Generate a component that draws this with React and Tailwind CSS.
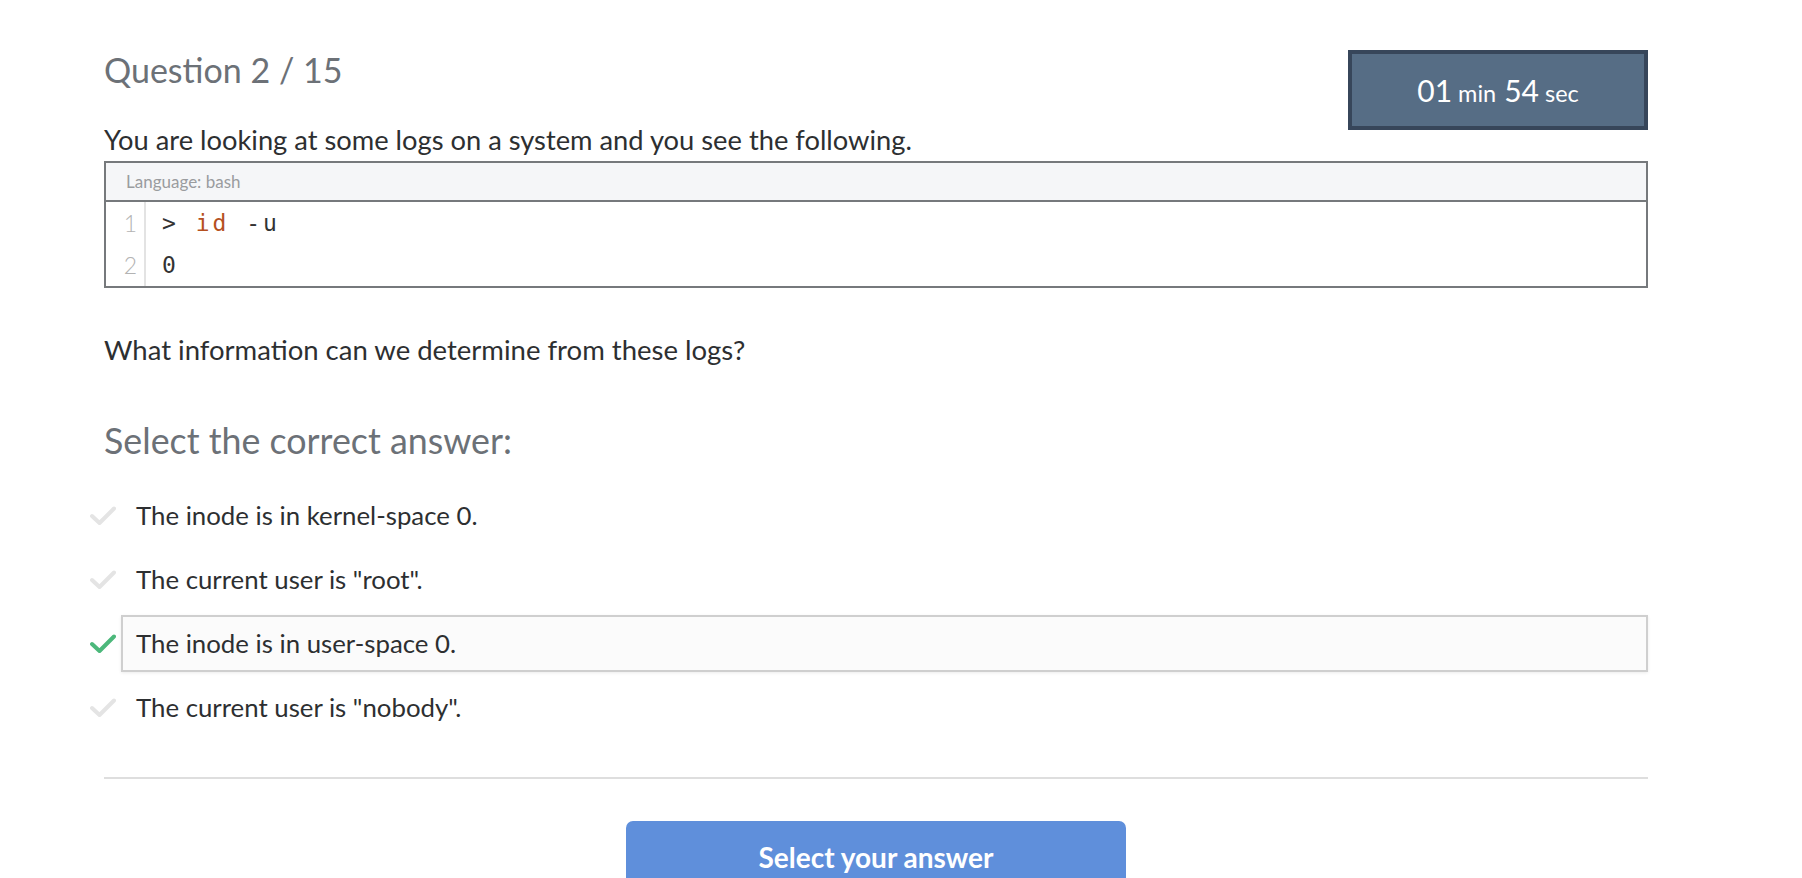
import { useState } from "react";

const options = [
  'The inode is in kernel-space 0.',
  'The current user is "root".',
  'The inode is in user-space 0.',
  'The current user is "nobody".',
];

function Check({ active }) {
  return (
    <svg width="26" height="20" viewBox="0 0 26 20" className="shrink-0">
      <polyline
        points="2,10 9.5,17 24,2.5"
        fill="none"
        stroke={active ? "#4cb87b" : "#e4e4e4"}
        strokeWidth="4"
        strokeLinecap="round"
        strokeLinejoin="round"
      />
    </svg>
  );
}

export default function App() {
  const [selected, setSelected] = useState(2);

  return (
    <div className="min-h-screen bg-white font-['Lato','Liberation_Sans',sans-serif] text-[#2d2f31]">
      <div className="ml-[104px] w-[1544px] pt-[50px]">
        {/* cabecera con temporizador */}
        <div className="float-right flex h-[80px] w-[300px] items-baseline justify-center border-4 border-[#37465a] bg-[#566d85] pt-[14px] text-white">
          <span className="text-[30px] leading-[40px]">01</span>
          <span className="ml-[6px] text-[23.5px]">min</span>
          <span className="ml-[8px] text-[30px]">54</span>
          <span className="ml-[6px] text-[23.5px]">sec</span>
        </div>
        <h1 className="text-[34px] leading-[40px] text-[#6c7177]">Question 2 / 15</h1>

        <p className="mt-[34px] text-[27.3px] leading-[32px]">
          You are looking at some logs on a system and you see the following.
        </p>

        {/* bloque de código */}
        <div className="mt-[5px] border-2 border-[#76797c]">
          <div className="flex h-[39px] items-center border-b-2 border-[#76797c] bg-[#f5f6f8] pl-[20px] text-[17px] text-[#9a9c9f]">
            Language: bash
          </div>
          <div className="flex">
            <div className="flex w-[40px] flex-col border-r-2 border-[#e3e3e3] pr-[7px] text-right text-[23px] font-light text-[#b3b3b3]">
              <div className="h-[42px] leading-[42px]">1</div>
              <div className="h-[42px] leading-[42px]">2</div>
            </div>
            <div className="flex flex-col pl-[16px] font-['DejaVu_Sans_Mono','Liberation_Mono',monospace] text-[23px] tracking-[3px] text-[#333]">
              <div className="h-[42px] leading-[42px]">
                &gt; <span className="text-[#b5501f]">id</span> -u
              </div>
              <div className="h-[42px] leading-[42px]">0</div>
            </div>
          </div>
        </div>

        <p className="mt-[46px] text-[27.5px] leading-[32px]">What information can we determine from these logs?</p>

        <h2 className="mt-[55px] text-[35.8px] leading-[40px] text-[#6c7177]">Select the correct answer:</h2>

        <div className="mt-[26px] -ml-[14px] flex flex-col gap-[7px]">
          {options.map((opt, i) => (
            <button
              key={i}
              type="button"
              onClick={() => setSelected(i)}
              className="flex items-center gap-[5px] text-left"
            >
              <Check active={selected === i} />
              <div
                className={`flex h-[57px] flex-1 items-center pl-[13px] text-[25.8px] ${
                  selected === i
                    ? "border-2 border-[#cfcfcf] bg-[#fbfbfb] shadow-[0_1px_3px_rgba(0,0,0,0.08)]"
                    : "border-2 border-transparent"
                }`}
              >
                {opt}
              </div>
            </button>
          ))}
        </div>

        <div className="mt-[41px] h-[2px] bg-[#dedede]" />

        <div className="mt-[42px] flex justify-center">
          <button
            type="button"
            className="h-[72px] w-[500px] rounded-[7px] bg-[#5f8fdb] text-[28px] font-bold text-white"
          >
            Select your answer
          </button>
        </div>
      </div>
    </div>
  );
}
